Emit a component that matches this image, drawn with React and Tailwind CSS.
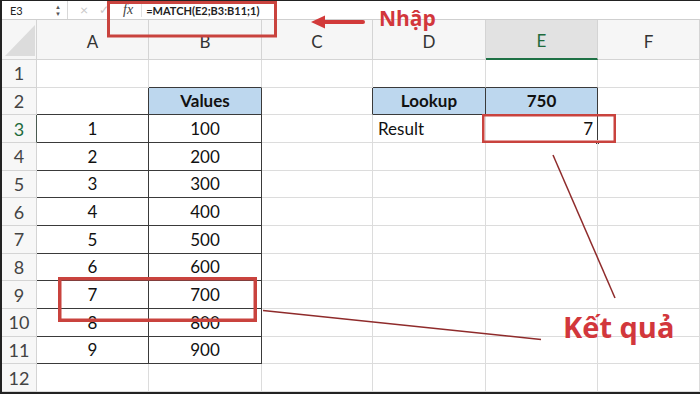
import React from 'react';

const GRID = 'grid grid-cols-[35px_112px_113px_111px_113px_112px_1fr]';
const COLS = ['A', 'B', 'C', 'D', 'E', 'F'];

// cell spec: t = text, a = align, b = bold, bg = blue fill, r/bd = dark right/bottom border
const cells = {
    B1: { bd: 1 },
    D1: { bd: 1 },
    E1: { bd: 1 },
    A2: { bd: 1, r: 1 },
    B2: { t: 'Values', b: 1, bg: 1, r: 1, bd: 1 },
    C2: { r: 1 },
    D2: { t: 'Lookup', b: 1, bg: 1, r: 1, bd: 1 },
    E2: { t: '750', b: 1, bg: 1, r: 1, bd: 1 },
    D3: { t: 'Result', a: 'l' },
    E3: { t: '7', a: 'r', r: 1 },
};
for (let i = 0; i < 9; i++) {
    const row = i + 3;
    cells['A' + row] = { t: String(i + 1), r: 1, bd: 1 };
    cells['B' + row] = { t: String((i + 1) * 100), r: 1, bd: 1 };
}

function Cell({ id }) {
    const c = cells[id] || {};
    const align = c.a === 'l' ? 'justify-start pl-[5px]' : c.a === 'r' ? 'justify-end pr-[4px]' : 'justify-center';
    return (
        <div
            className={`relative flex items-center ${align} border-r border-b text-[17px] leading-none text-[#111] ${c.b ? 'font-bold' : ''} ${c.bg ? 'bg-[#bdd7ee]' : ''} ${c.r ? 'border-r-[#3a3a3a]' : 'border-r-[#dcdcdc]'} ${c.bd ? 'border-b-[#3a3a3a]' : 'border-b-[#dcdcdc]'}`}
        >
            {c.t}
            {id === 'E3' && <span className="absolute right-[-3px] bottom-[-3px] w-[5px] h-[5px] bg-[#3a3a3a] border border-white" />}
        </div>
    );
}

export default function App() {
    return (
        <div className="relative w-[700px] h-[394px] bg-white overflow-hidden border-l-2 border-t border-b-2 border-[#222] font-['Lato',sans-serif]">
            {/* formula bar */}
            <div className="flex items-center h-[19px] border-b border-[#cfcfcf] text-[11px] leading-none text-[#222]">
                <div className="w-[53px] pl-[8px]">E3</div>
                <div className="flex flex-col items-center text-[6px] leading-[7px] text-[#555]">
                    <span>▲</span>
                    <span>▼</span>
                </div>
                <div className="ml-[6px] h-full border-l border-[#d8d8d8]" />
                <span className="ml-[12px] text-[14px] text-[#c8c8c8]">×</span>
                <span className="ml-[11px] text-[12px] text-[#c8c8c8]">✓</span>
                <span className="ml-[14px] text-[14px] italic text-[#444] font-['Liberation_Serif',serif]">fx</span>
                <div className="ml-[8px] h-[13px] border-l border-[#e0e0e0]" />
                <span className="ml-[4px] font-bold text-[#222]">=MATCH(E2;B3:B11;1)</span>
            </div>

            {/* column headers */}
            <div className={`${GRID} h-[40px] bg-[#f6f6f6] text-[17px] leading-none text-[#333]`}>
                <div className="relative border-r border-b border-[#d4d4d4]">
                    <svg className="absolute left-[3px] bottom-[3px]" width="30" height="31">
                        <polygon points="0,31 30,31 30,0" fill="#dcdcdc" />
                    </svg>
                </div>
                {COLS.map((c) => (
                    <div
                        key={c}
                        className={`flex items-center justify-center pt-[3px] border-r border-[#d4d4d4] ${c === 'E' ? 'bg-[#e2e2e2] text-[#1e6b3d] border-b-2 border-b-[#1e7145]' : 'border-b'}`}
                    >
                        {c}
                    </div>
                ))}
            </div>

            {/* rows */}
            {Array.from({ length: 12 }, (_, i) => i + 1).map((row) => (
                <div key={row} className={`${GRID} h-[27.67px]`}>
                    <div
                        className={`flex items-center justify-center bg-[#f7f7f7] border-r border-b border-[#d4d4d4] text-[18px] leading-none ${row === 3 ? 'text-[#1e6b3d] border-r-[#4a5a50]' : 'text-[#444]'}`}
                    >
                        {row}
                    </div>
                    {COLS.map((c) => (
                        <Cell key={c} id={c + row} />
                    ))}
                </div>
            ))}

            {/* annotations */}
            <svg className="absolute left-[-2px] top-[-1px] pointer-events-none" width="700" height="394">
                <rect x="108.5" y="2.5" width="167" height="33.5" fill="none" stroke="#c9433e" strokeWidth="3" />
                <line x1="322" y1="22" x2="363" y2="22" stroke="#d23a3a" strokeWidth="4" strokeLinecap="round" />
                <polygon points="311,22 325,15.5 325,28.5" fill="#d23a3a" />
                <rect x="483.25" y="115.25" width="131.5" height="26.5" fill="none" stroke="#c9433e" strokeWidth="2.5" />
                <rect x="59.75" y="278.75" width="195.5" height="41.5" fill="none" stroke="#c9433e" strokeWidth="3.5" />
                <line x1="263" y1="310.5" x2="541" y2="339.5" stroke="#8f2b2b" strokeWidth="1.5" />
                <line x1="553" y1="155" x2="615" y2="298" stroke="#8f2b2b" strokeWidth="1.5" />
            </svg>
            <span className="absolute left-[377px] top-[7px] text-[21px] leading-none font-bold text-[#d2373c] font-['Open_Sans',sans-serif]">
                Nhập
            </span>
            <span className="absolute left-[561px] top-[311px] text-[29px] leading-none font-bold text-[#d2373c] font-['Open_Sans',sans-serif]">
                Kết quả
            </span>
        </div>
    );
}
